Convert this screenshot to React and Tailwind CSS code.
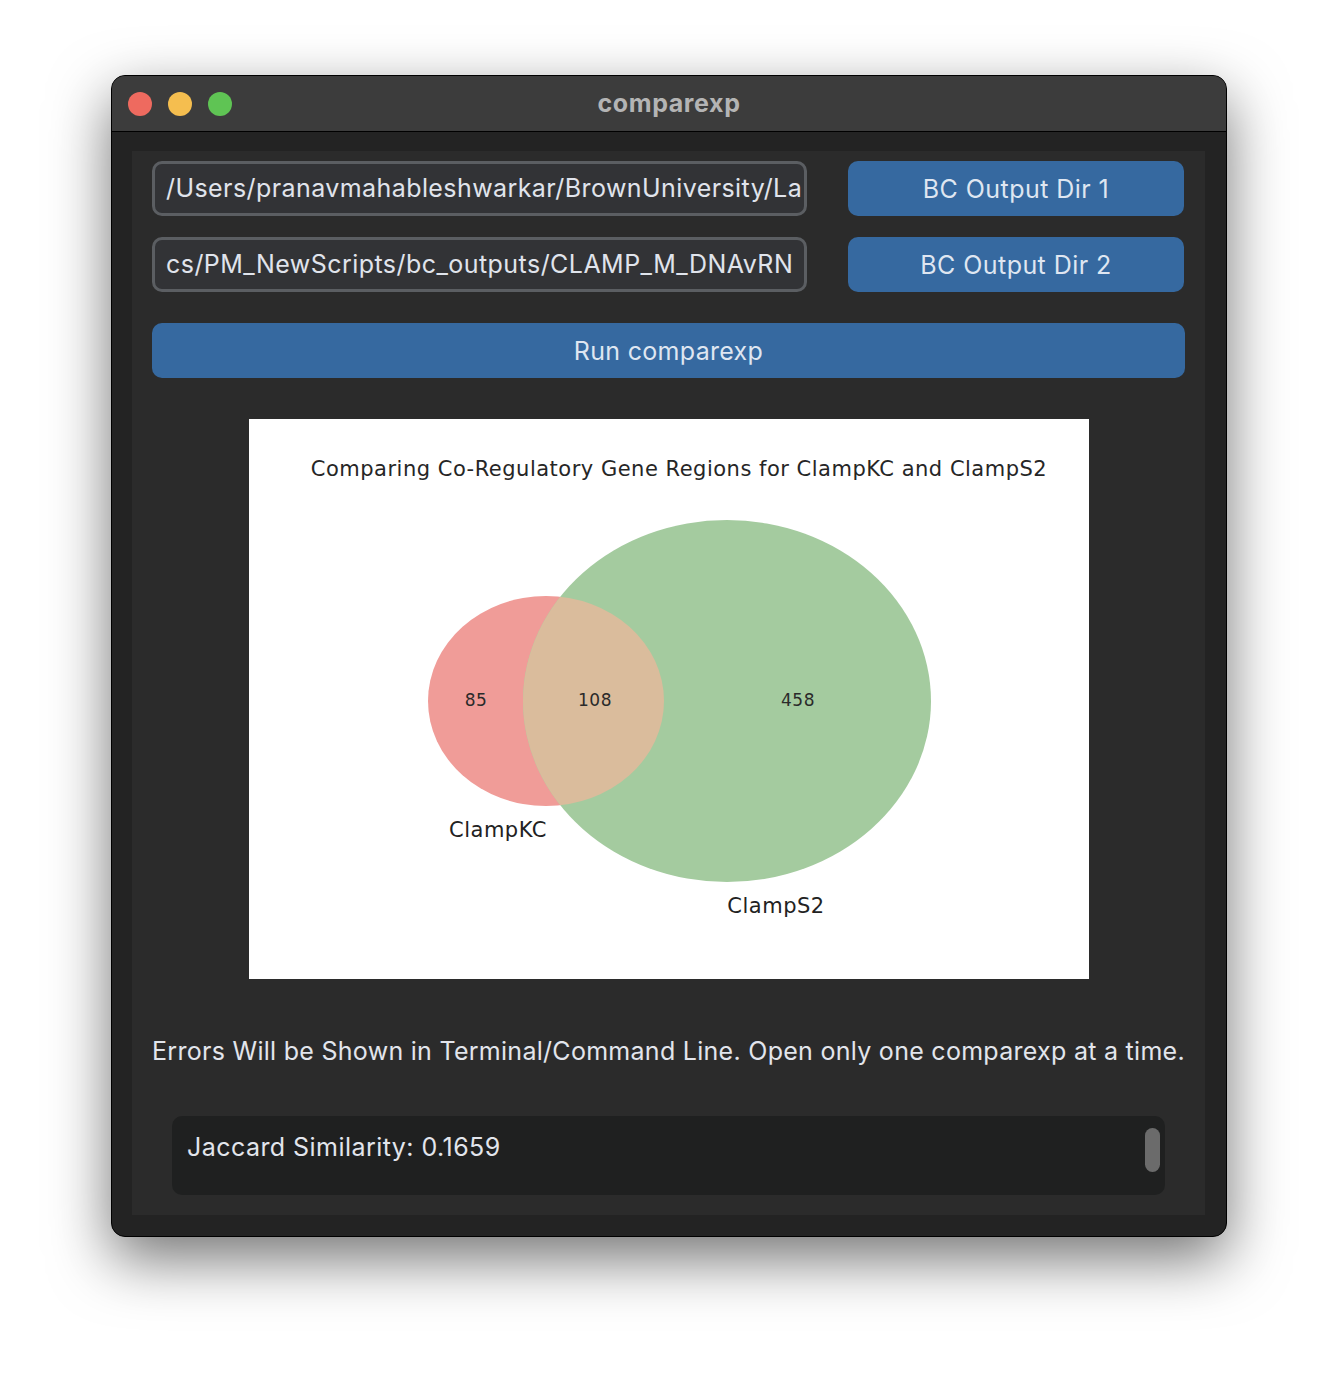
import React from "react";

function Venn() {
  return (
    <svg width="840" height="560" viewBox="0 0 840 560" className="block">
      <defs>
        <clipPath id="redclip">
          <ellipse cx="297" cy="282" rx="118" ry="105" />
        </clipPath>
      </defs>
      <rect x="0" y="0" width="840" height="560" fill="#ffffff" />
      <text x="430" y="57" textAnchor="middle" fontFamily="'DejaVu Sans', sans-serif" fontSize="21" fill="#262626" letterSpacing="0.5">
        Comparing Co-Regulatory Gene Regions for ClampKC and ClampS2
      </text>
      <ellipse cx="297" cy="282" rx="118" ry="105" fill="#f09c98" />
      <ellipse cx="478" cy="282" rx="204" ry="181" fill="#a4cb9f" />
      <ellipse cx="478" cy="282" rx="204" ry="181" fill="#dabc9c" clipPath="url(#redclip)" />
      <g fontFamily="'DejaVu Sans', sans-serif" fontSize="17" fill="#2a2a2a" textAnchor="middle" letterSpacing="0.5">
        <text x="227" y="287">85</text>
        <text x="346" y="287">108</text>
        <text x="549" y="287">458</text>
      </g>
      <g fontFamily="'DejaVu Sans', sans-serif" fontSize="21" fill="#222" textAnchor="middle" letterSpacing="0.5">
        <text x="249" y="418">ClampKC</text>
        <text x="527" y="494">ClampS2</text>
      </g>
    </svg>
  );
}

export default function App() {
  const font = { fontFamily: "Inter, 'Liberation Sans', sans-serif" };
  return (
    <div className="min-h-[1384px] w-[1338px] bg-white pl-[111px] pt-[75px]" style={font}>
      <div className="w-[1116px] h-[1162px] rounded-[14px] border border-black bg-[#232323] overflow-hidden shadow-[0_22px_60px_rgba(0,0,0,0.55)] flex flex-col">
        <div className="relative h-[56px] bg-[#3c3c3c] border-b border-black flex items-center shrink-0">
          <div className="flex gap-4 pl-4">
            <div className="w-6 h-6 rounded-full bg-[#ee6a5f]" />
            <div className="w-6 h-6 rounded-full bg-[#f5be4f]" />
            <div className="w-6 h-6 rounded-full bg-[#5fc454]" />
          </div>
          <div className="absolute inset-0 flex items-center justify-center text-[25px] font-bold text-[#b4b4b4] tracking-[0.6px]">
            comparexp
          </div>
        </div>
        <div className="flex-1 pl-[20px] pr-[21px] pt-[19px] pb-[19px]">
          <div className="h-[1064px] bg-[#2b2b2b] px-[20px] pt-[10px] flex flex-col">
            <div className="flex gap-[41px]">
              <div className="flex flex-col gap-[21px]">
                <div className="w-[655px] h-[55px] rounded-[10px] border-[3px] border-[#5b5e62] bg-[#323336] flex items-center pl-[11px] overflow-hidden">
                  <span className="text-[25px] text-[#e0e4ec] whitespace-nowrap tracking-[0.42px] leading-none">/Users/pranavmahableshwarkar/BrownUniversity/La</span>
                </div>
                <div className="w-[655px] h-[55px] rounded-[10px] border-[3px] border-[#5b5e62] bg-[#323336] flex items-center pl-[11px] overflow-hidden">
                  <span className="text-[25px] text-[#e0e4ec] whitespace-nowrap tracking-[0.45px] leading-none">cs/PM_NewScripts/bc_outputs/CLAMP_M_DNAvRN</span>
                </div>
              </div>
              <div className="flex flex-col gap-[21px]">
                <div className="w-[336px] h-[55px] rounded-[10px] bg-[#3669a0] flex items-center justify-center text-[25px] text-[#dfe6f1] tracking-[0.45px] pt-[2px]">
                  BC Output Dir 1
                </div>
                <div className="w-[336px] h-[55px] rounded-[10px] bg-[#3669a0] flex items-center justify-center text-[25px] text-[#dfe6f1] tracking-[0.45px] pt-[2px]">
                  BC Output Dir 2
                </div>
              </div>
            </div>
            <div className="mt-[31px] h-[55px] rounded-[10px] bg-[#3669a0] flex items-center justify-center text-[25px] text-[#dfe6f1] tracking-[0.3px] pt-[3px]">
              Run comparexp
            </div>
            <div className="mt-[41px] flex justify-center">
              <Venn />
            </div>
            <div className="mt-[54px] text-[25px] text-[#e2e5ec] whitespace-nowrap tracking-[0.28px] text-center">
              Errors Will be Shown in Terminal/Command Line. Open only one comparexp at a time.
            </div>
            <div className="mt-[45px] mx-[20px] h-[79px] rounded-[10px] bg-[#1f2020] relative pl-[15px] pt-[13px]">
              <span className="text-[25px] text-[#e2e5ec] tracking-[0.45px]">Jaccard Similarity: 0.1659</span>
              <div className="absolute right-[5px] top-[12px] w-[15px] h-[44px] rounded-full bg-[#6b6b6b]" />
            </div>
          </div>
        </div>
      </div>
    </div>
  );
}
